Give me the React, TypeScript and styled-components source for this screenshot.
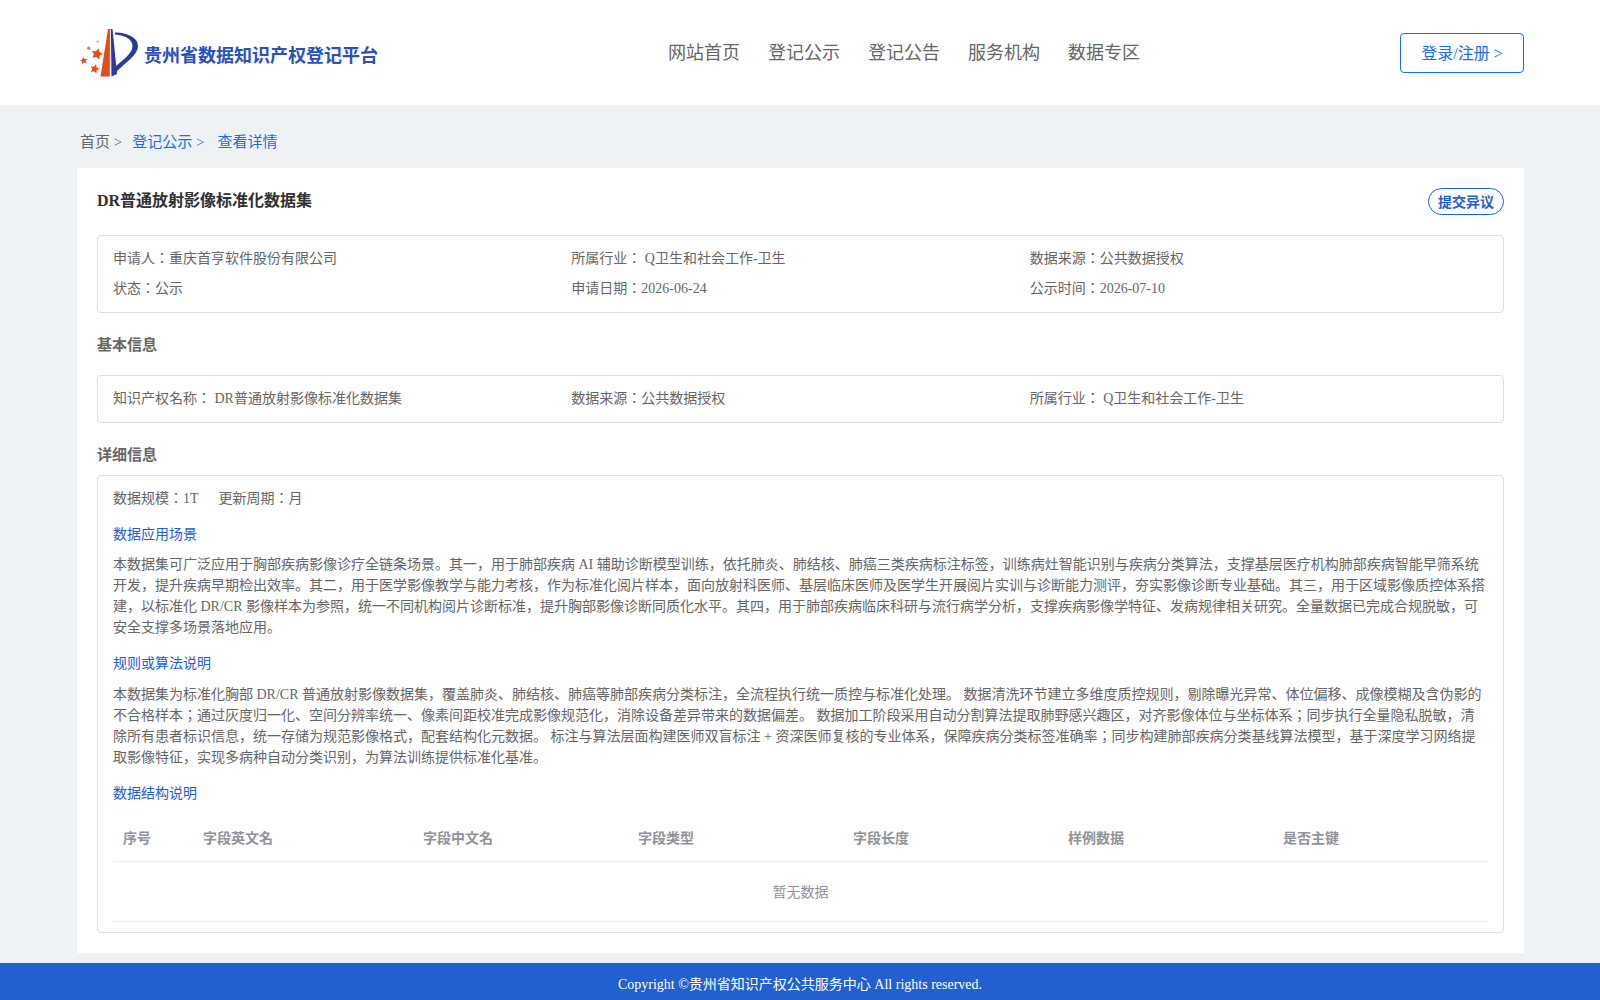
import styled, { createGlobalStyle } from "styled-components";

const GlobalStyle = createGlobalStyle`
  html, body {
    margin: 0;
    padding: 0;
    background: #eff2f5;
    font-family: "Liberation Serif", "Noto Sans CJK JP", serif;
  }
  * {
    box-sizing: border-box;
  }
`;

const Page = styled.div`
  height: 1000px;
  display: flex;
  flex-direction: column;
  overflow: hidden;
`;

const Header = styled.header`
  height: 105px;
  flex: none;
  background: #fff;
  padding: 0 76px;
  display: flex;
  align-items: flex-start;
`;

const Brand = styled.div`
  width: 484px;
  height: 105px;
  display: flex;
  align-items: center;
`;

const BrandName = styled.span`
  margin-left: 2px;
  margin-top: 2px;
  font-size: 18px;
  font-weight: 700;
  color: #2a50bc;
  white-space: nowrap;
`;

const Nav = styled.nav`
  display: flex;
  gap: 28px;
  margin-left: 108px;
  padding-top: 40px;
`;

const NavLink = styled.a`
  font-size: 18px;
  line-height: 26px;
  color: #666;
`;

const LoginButton = styled.button`
  margin-left: auto;
  margin-top: 33px;
  width: 124px;
  height: 40px;
  padding: 0 0 2px;
  border: 1px solid #1a6fe8;
  border-radius: 4px;
  background: #fff;
  color: #1a6fe8;
  font: inherit;
  font-size: 16px;
`;

const Main = styled.main`
  flex: 1;
  min-height: 0;
  padding: 0 76px 10px 77px;
  display: flex;
  flex-direction: column;
`;

const Crumbs = styled.div`
  height: 63px;
  flex: none;
  padding: 29px 0 0 3px;
  font-size: 15px;
  line-height: 16px;
  display: flex;
`;

const Crumb = styled.span<{ $active?: boolean; $gap: number }>`
  color: ${(p) => (p.$active ? "#1a6fe8" : "#666")};
  margin-right: ${(p) => p.$gap}px;
`;

const Card = styled.section`
  flex: 1;
  min-height: 0;
  background: #fff;
  padding: 20px;
  display: flex;
  flex-direction: column;
`;

const TitleRow = styled.div`
  height: 47px;
  flex: none;
  display: flex;
  justify-content: space-between;
  align-items: flex-start;
`;

const Title = styled.h1`
  margin: 0;
  font-size: 16px;
  line-height: 26px;
  font-weight: 700;
  color: #303133;
`;

const DisputeButton = styled.button`
  width: 76px;
  height: 27px;
  padding: 0 0 2px;
  border: 1px solid #2360cf;
  border-radius: 14px;
  background: #fff;
  color: #2360cf;
  font: inherit;
  font-size: 14px;
  font-weight: 700;
`;

const InfoBox = styled.div`
  flex: none;
  border: 1px solid #dcdfe6;
  border-radius: 4px;
  padding: 8px 15px;
  display: grid;
  grid-template-columns: repeat(3, 1fr);
  color: #666;
  font-size: 14px;
  line-height: 30px;
`;

const SectionTitle = styled.h2<{ $gap: number }>`
  flex: none;
  margin: 22px 0 ${(p) => p.$gap}px;
  font-size: 15px;
  line-height: 20px;
  font-weight: 700;
  color: #666;
`;

const DetailBox = styled.div`
  flex: 1;
  min-height: 0;
  border: 1px solid #dcdfe6;
  border-radius: 4px;
  padding: 11px 15px 10px;
  color: #666;
  font-size: 14px;
`;

const Scale = styled.div`
  display: flex;
  gap: 20px;
  line-height: 23px;
`;

const SubHeading = styled.div<{ $top: number }>`
  color: #2360cf;
  line-height: 20px;
  margin-top: ${(p) => p.$top}px;
`;

const Paragraph = styled.p<{ $top: number }>`
  margin: ${(p) => p.$top}px 0 0;
  line-height: 21px;
`;

const FieldTable = styled.table`
  width: 100%;
  border-collapse: collapse;
  table-layout: fixed;
  margin-top: 9px;
`;

const HeadCell = styled.th<{ $width: number }>`
  width: ${(p) => p.$width}px;
  height: 48px;
  padding: 0 10px;
  text-align: left;
  font-size: 14px;
  font-weight: 700;
  color: #909399;
  border-bottom: 1px solid #ebeef5;
`;

const EmptyCell = styled.td`
  height: 60px;
  text-align: center;
  color: #909399;
  border-bottom: 1px solid #ebeef5;
`;

const Footer = styled.footer`
  height: 37px;
  flex: none;
  background: #2360cf;
  color: #fff;
  font-size: 14px;
  line-height: 44px;
  text-align: center;
`;

const starPoints = (cx: number, cy: number, r: number, tilt: number) =>
  Array.from({ length: 10 }, (_, i) => {
    const radius = i % 2 === 0 ? r : r * 0.5;
    const angle = ((i * 36 - 90 + tilt) * Math.PI) / 180;
    return `${(cx + radius * Math.cos(angle)).toFixed(2)},${(cy + radius * Math.sin(angle)).toFixed(2)}`;
  }).join(" ");

function Logo() {
  return (
    <svg width="66" height="56" viewBox="0 0 66 56" aria-hidden="true">
      <path d="M24.500 51.500 L32 4 L34 4 L33.800 51.500 Z" fill="#e8491d" />
      <path d="M34.800 4 L36.500 4 L41 49 L35.500 51.500 Z" fill="#2a3a9c" />
      <path
        d="M39 7.500 C52 7.500 62 13 62 21 C62 30 50 37 40 47 L39 42 C46 35 56.500 29 56.500 21 C56.500 14 49 10.500 39 9.500 Z"
        fill="#2a3a9c"
      />
      <polygon points={starPoints(21, 29, 6, 15)} fill="#e8491d" />
      <polygon points={starPoints(7.700, 35.700, 3.800, -10)} fill="#e8491d" />
      <polygon points={starPoints(18.700, 44, 4.800, 15)} fill="#e8491d" />
      <circle cx="12.700" cy="23.300" r="1.700" fill="#ee7a55" />
      <circle cx="21.700" cy="16.700" r="1.100" fill="#f0977c" />
    </svg>
  );
}

const COLUMNS: [string, number][] = [
  ["序号", 80],
  ["字段英文名", 220],
  ["字段中文名", 215],
  ["字段类型", 215],
  ["字段长度", 215],
  ["样例数据", 215],
  ["是否主键", 215],
];

export default function App() {
  return (
    <Page>
      <GlobalStyle />
      <Header>
        <Brand>
          <Logo />
          <BrandName>贵州省数据知识产权登记平台</BrandName>
        </Brand>
        <Nav>
          {["网站首页", "登记公示", "登记公告", "服务机构", "数据专区"].map((item) => (
            <NavLink key={item}>{item}</NavLink>
          ))}
        </Nav>
        <LoginButton>登录/注册 &gt;</LoginButton>
      </Header>
      <Main>
        <Crumbs>
          <Crumb $gap={10}>首页 &gt;</Crumb>
          <Crumb $active $gap={13}>登记公示 &gt;</Crumb>
          <Crumb $active $gap={0}>查看详情</Crumb>
        </Crumbs>
        <Card>
          <TitleRow>
            <Title>DR普通放射影像标准化数据集</Title>
            <DisputeButton>提交异议</DisputeButton>
          </TitleRow>
          <InfoBox>
            <div>申请人：重庆首亨软件股份有限公司</div>
            <div>所属行业： Q卫生和社会工作-卫生</div>
            <div>数据来源：公共数据授权</div>
            <div>状态：公示</div>
            <div>申请日期：2026-06-24</div>
            <div>公示时间：2026-07-10</div>
          </InfoBox>
          <SectionTitle $gap={20}>基本信息</SectionTitle>
          <InfoBox>
            <div>知识产权名称： DR普通放射影像标准化数据集</div>
            <div>数据来源：公共数据授权</div>
            <div>所属行业： Q卫生和社会工作-卫生</div>
          </InfoBox>
          <SectionTitle $gap={10}>详细信息</SectionTitle>
          <DetailBox>
            <Scale>
              <span>数据规模：1T</span>
              <span>更新周期：月</span>
            </Scale>
            <SubHeading $top={15}>数据应用场景</SubHeading>
            <Paragraph $top={9}>
              本数据集可广泛应用于胸部疾病影像诊疗全链条场景。其一，用于肺部疾病 AI 辅助诊断模型训练，依托肺炎、肺结核、肺癌三类疾病标注标签，训练病灶智能识别与疾病分类算法，支撑基层医疗机构肺部疾病智能早筛系统开发，提升疾病早期检出效率。其二，用于医学影像教学与能力考核，作为标准化阅片样本，面向放射科医师、基层临床医师及医学生开展阅片实训与诊断能力测评，夯实影像诊断专业基础。其三，用于区域影像质控体系搭建，以标准化 DR/CR 影像样本为参照，统一不同机构阅片诊断标准，提升胸部影像诊断同质化水平。其四，用于肺部疾病临床科研与流行病学分析，支撑疾病影像学特征、发病规律相关研究。全量数据已完成合规脱敏，可安全支撑多场景落地应用。
            </Paragraph>
            <SubHeading $top={16}>规则或算法说明</SubHeading>
            <Paragraph $top={10}>
              本数据集为标准化胸部 DR/CR 普通放射影像数据集，覆盖肺炎、肺结核、肺癌等肺部疾病分类标注，全流程执行统一质控与标准化处理。 数据清洗环节建立多维度质控规则，剔除曝光异常、体位偏移、成像模糊及含伪影的不合格样本；通过灰度归一化、空间分辨率统一、像素间距校准完成影像规范化，消除设备差异带来的数据偏差。 数据加工阶段采用自动分割算法提取肺野感兴趣区，对齐影像体位与坐标体系；同步执行全量隐私脱敏，清除所有患者标识信息，统一存储为规范影像格式，配套结构化元数据。 标注与算法层面构建医师双盲标注 + 资深医师复核的专业体系，保障疾病分类标签准确率；同步构建肺部疾病分类基线算法模型，基于深度学习网络提取影像特征，实现多病种自动分类识别，为算法训练提供标准化基准。
            </Paragraph>
            <SubHeading $top={16}>数据结构说明</SubHeading>
            <FieldTable>
              <thead>
                <tr>
                  {COLUMNS.map(([name, width]) => (
                    <HeadCell key={name} $width={width}>{name}</HeadCell>
                  ))}
                </tr>
              </thead>
              <tbody>
                <tr>
                  <EmptyCell colSpan={COLUMNS.length}>暂无数据</EmptyCell>
                </tr>
              </tbody>
            </FieldTable>
          </DetailBox>
        </Card>
      </Main>
      <Footer>Copyright ©贵州省知识产权公共服务中心 All rights reserved.</Footer>
    </Page>
  );
}
